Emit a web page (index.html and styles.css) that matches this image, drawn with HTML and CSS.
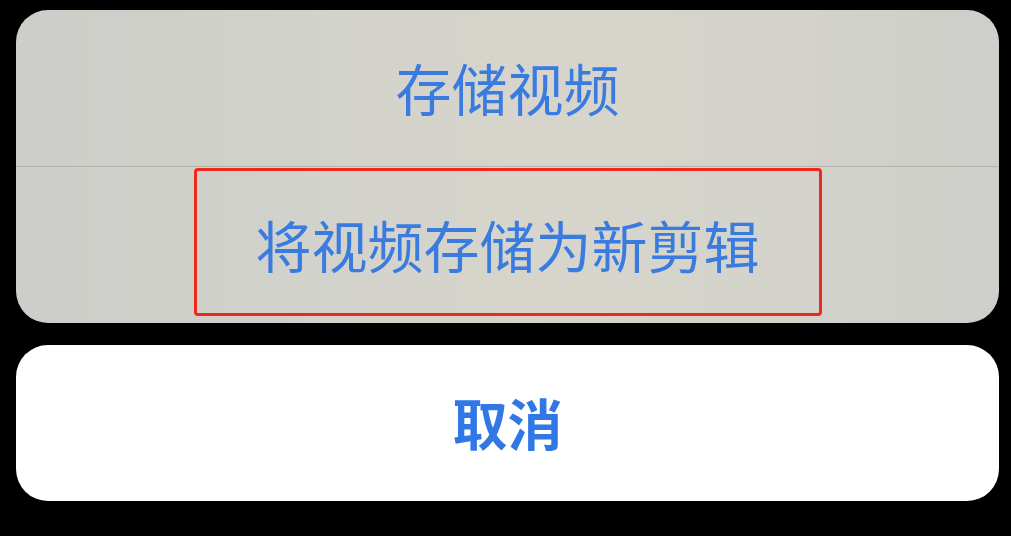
FILE: index.html
```html
<!DOCTYPE html>
<html lang="zh-CN">
<head>
<meta charset="utf-8">
<title>存储视频</title>
<link rel="stylesheet" href="styles.css">
</head>
<body>
<div class="sheet">
  <div class="group">
    <div class="action">存储视频</div>
    <div class="divider"></div>
    <div class="action">将视频存储为新剪辑</div>
    <div class="highlight"></div>
  </div>
  <div class="cancel">取消</div>
</div>
</body>
</html>
```

FILE: styles.css
```css
html, body {
  margin: 0;
  padding: 0;
  background: #000;
}
body {
  width: 1011px;
  height: 536px;
  overflow: hidden;
  font-family: "Noto Sans CJK SC", "Noto Sans", sans-serif;
}
.sheet {
  padding: 10px 12px 0 16px;
  display: flex;
  flex-direction: column;
  gap: 22px;
}
.group {
  position: relative;
  height: 313px;
  border-radius: 32px;
  overflow: hidden;
  display: flex;
  flex-direction: column;
  background: linear-gradient(90deg, #cdcdc9 0%, #d2d2cc 30%, #d7d5cb 55%, #d5d4cc 70%, #cececa 100%);
}
.action {
  height: 156px;
  box-sizing: border-box;
  padding-bottom: 4px;
  display: flex;
  align-items: center;
  justify-content: center;
  font-size: 56px;
  color: #3a7be0;
}
.divider {
  height: 1px;
  background: #b4b4ae;
}
.highlight {
  position: absolute;
  left: 178px;
  top: 158px;
  width: 622px;
  height: 142px;
  border: 3px solid #f0281c;
  border-radius: 4px;
}
.cancel {
  height: 156px;
  box-sizing: border-box;
  padding-bottom: 4px;
  border-radius: 32px;
  background: #fff;
  display: flex;
  align-items: center;
  justify-content: center;
  font-size: 55px;
  font-weight: 600;
  color: #3178e6;
}
```
